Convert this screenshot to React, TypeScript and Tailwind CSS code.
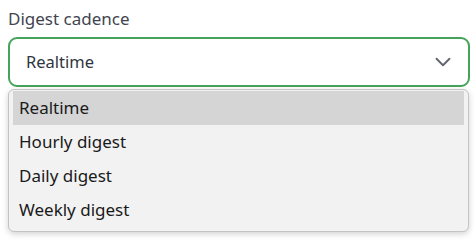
import { ChevronDown } from 'lucide-react';

const options = ['Realtime', 'Hourly digest', 'Daily digest', 'Weekly digest'];

const App = () => {
  return (
    <div className="w-[475px] h-[240px] bg-white px-2 pt-[7px] font-['Noto_Sans',sans-serif]">
      <label className="block text-[17px] leading-6 text-[#3f4550]">Digest cadence</label>
      <div className="relative mt-[6px] w-[462px]">
        <div className="h-[50px] border-2 border-[#46a35a] rounded-[9px] bg-white flex items-center justify-between pl-[16px] pr-[12px]">
          <span className="text-[16.5px] text-[#2f3540]">Realtime</span>
          <ChevronDown size={26} strokeWidth={1.7} className="text-[#5f6470]" />
        </div>
        <ul className="absolute left-0 top-[52px] w-[461px] bg-[#f2f2f2] border border-[#c4c4c4] rounded-[6px] shadow-[0_2px_6px_rgba(0,0,0,0.18)] px-[4px] pt-[1px] pb-[4px]">
          {options.map((o, i) => (
            <li
              key={o}
              className={`h-[34px] flex items-center px-[6px] text-[17px] text-[#1a1a1a] ${i === 0 ? 'bg-[#d5d5d5]' : ''}`}
            >
              {o}
            </li>
          ))}
        </ul>
      </div>
    </div>
  );
};

export default App;
